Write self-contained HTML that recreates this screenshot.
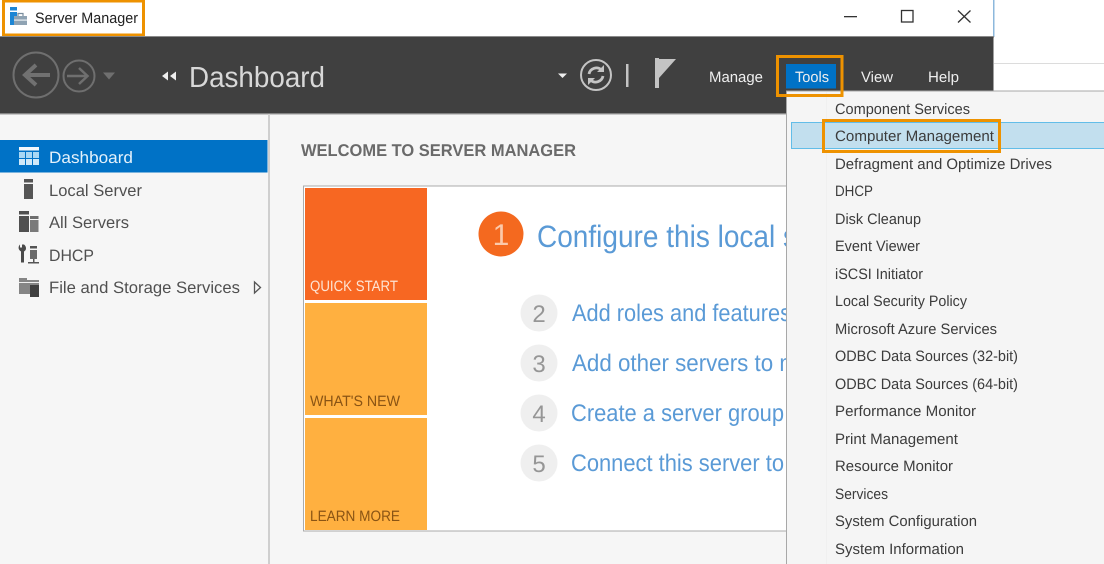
<!DOCTYPE html>
<html><head><meta charset="utf-8"><title>Server Manager</title>
<style>
html,body{margin:0;padding:0;background:#fff;width:1104px;height:564px;overflow:hidden}
svg{display:block;font-family:"Liberation Sans",sans-serif;filter:blur(.35px)}
.m{font-size:15px;fill:#3c3c3c}
.s{font-size:16.5px;fill:#505050}
.b{font-size:24px;fill:#5a9ad6}
.n{font-size:24px;fill:#969696;text-anchor:middle}
.t{font-size:15px;fill:#f2f2f2}
</style></head><body>
<svg width="1104" height="564" viewBox="0 0 1104 564" xmlns="http://www.w3.org/2000/svg" text-rendering="geometricPrecision">
<rect width="1104" height="564" fill="#fff"/>
<!-- outside window -->
<rect x="994" y="63" width="110" height="1" fill="#dcdcdc"/>
<rect x="993" y="0" width="1.5" height="37" fill="#8db8dc"/>
<!-- title -->
<text x="35" y="23" font-size="15" fill="#222" textLength="103" lengthAdjust="spacingAndGlyphs">Server Manager</text>
<g>
<rect x="10" y="7" width="7" height="3.5" fill="#1e86d4"/>
<rect x="10" y="12" width="7" height="13" fill="#1e86d4"/>
<rect x="14" y="16" width="13" height="9" fill="#8fa3b3"/>
<rect x="14" y="19.5" width="13" height="1.2" fill="#e8eef2"/>
<path d="M18 16v-2.500h5V16" fill="none" stroke="#7b8e9e" stroke-width="1.200"/>
</g>
<rect x="3.500" y="1" width="140" height="34" fill="none" stroke="#ee9200" stroke-width="3"/>
<!-- window controls -->
<rect x="844" y="16" width="13" height="1.300" fill="#333"/>
<rect x="901.500" y="10.500" width="11.500" height="11.500" fill="none" stroke="#333" stroke-width="1.300"/>
<path d="M958 10.500l12.500 12M970.500 10.500l-12.500 12" stroke="#333" stroke-width="1.300" fill="none"/>
<!-- dark bar -->
<rect x="0" y="36" width="994" height="1.500" fill="#8a8a8a"/>
<rect x="0" y="37" width="993.500" height="77" fill="#404040"/>
<rect x="0" y="113.500" width="993" height="1.500" fill="#c8c8c8"/>
<!-- nav -->
<g fill="none" stroke="#6f6f6f">
<circle cx="36" cy="75" r="22.500" stroke-width="2"/>
<path d="M26 75h24" stroke-width="4" stroke="#717171"/>
<path d="M36 65l-11 10 11 10" stroke-width="4" stroke="#717171"/>
<circle cx="79" cy="76" r="15.500" stroke-width="2"/>
<path d="M67 76h20" stroke-width="2.500"/>
<path d="M79 68l8.500 8-8.500 8" stroke-width="2.500"/>
</g>
<path d="M103 72.500h12l-6 7z" fill="#6f6f6f"/>
<path d="M162 76l6-4.500v9zM170 76l6-4.500v9z" fill="#eee"/>
<text x="189" y="87" font-size="29" fill="#d8d8d8" textLength="136" lengthAdjust="spacingAndGlyphs">Dashboard</text>
<path d="M558 73.500h9l-4.500 4.500z" fill="#eee"/>
<circle cx="596" cy="75" r="15" fill="none" stroke="#c4c4c4" stroke-width="2"/>
<path d="M589 74a7.500 7.500 0 0 1 12.500-4M603 76a7.500 7.500 0 0 1-12.500 4" fill="none" stroke="#c4c4c4" stroke-width="2.800"/>
<path d="M604 65v7h-7zM588 85v-7h7z" fill="#c4c4c4"/>
<rect x="626" y="64" width="2.500" height="23" fill="#c4c4c4"/>
<rect x="655" y="58" width="4" height="30" fill="#c4c4c4"/>
<path d="M659 59h17l-17 19z" fill="#c4c4c4"/>
<text x="709" y="82" font-size="15" fill="#eee" textLength="54" lengthAdjust="spacingAndGlyphs">Manage</text>
<rect x="786" y="64" width="50" height="24.500" fill="#0072c6"/>
<text x="795" y="82" font-size="15" fill="#eee" textLength="34" lengthAdjust="spacingAndGlyphs">Tools</text>
<text x="861" y="82" font-size="15" fill="#eee" textLength="32" lengthAdjust="spacingAndGlyphs">View</text>
<text x="928" y="82" font-size="15" fill="#eee" textLength="31" lengthAdjust="spacingAndGlyphs">Help</text>
<!-- sidebar -->
<rect x="0" y="115" width="268" height="449" fill="#f6f6f6"/>
<rect x="268" y="114" width="2" height="450" fill="#cfcfcf"/>
<rect x="270" y="115" width="520" height="449" fill="#f6f6f6"/>
<rect x="0" y="140" width="267.500" height="32.500" fill="#0072c6"/>
<g>
<rect x="19" y="147" width="20" height="3.500" fill="#f4f8fc"/>
<rect x="19" y="152" width="6" height="6" fill="#a9d8f4"/><rect x="26" y="152" width="6" height="6" fill="#a9d8f4"/><rect x="33" y="152" width="6" height="6" fill="#a9d8f4"/>
<rect x="19" y="159" width="6" height="6" fill="#cfe9f9"/><rect x="26" y="159" width="6" height="6" fill="#cfe9f9"/><rect x="33" y="159" width="6" height="6" fill="#cfe9f9"/>
</g>
<rect x="24" y="179" width="9" height="3.500" fill="#555"/><rect x="24" y="184" width="9" height="15" fill="#555"/>
<rect x="19" y="211" width="10" height="3.500" fill="#505050"/><rect x="19" y="216" width="10" height="16" fill="#505050"/>
<rect x="30" y="216" width="8.500" height="3" fill="#6e6e6e"/><rect x="30" y="220" width="8.500" height="12" fill="#7a7a7a"/>
<path d="M23 245v3h-2v-3c-1 1-2 3-1 5 .5 1 1.500 1.500 2 2v11h3v-11c1-.5 2-1.500 2-3 0-1.500-.5-3-2-4z" fill="#4a4a4a" transform="translate(-1 -.5)"/>
<rect x="30" y="246" width="7" height="2.500" fill="#555"/><rect x="30" y="250" width="7" height="9" fill="#6a6a6a"/>
<rect x="28" y="262" width="11" height="1.500" fill="#555"/><rect x="33" y="259" width="1.500" height="3" fill="#555"/>
<path d="M19 278h8v2h12v14H19z" fill="#858585"/>
<rect x="19" y="282" width="20" height="1" fill="#eee"/>
<rect x="30" y="285" width="9" height="12" fill="#3f3f3f"/>
<g class="s">
<text x="49" y="163" class="s" style="fill:#e3f1fb" textLength="84" lengthAdjust="spacingAndGlyphs">Dashboard</text>
<text x="49" y="196" class="s" textLength="93" lengthAdjust="spacingAndGlyphs">Local Server</text>
<text x="49" y="228" class="s" textLength="80" lengthAdjust="spacingAndGlyphs">All Servers</text>
<text x="49" y="261" class="s" textLength="45" lengthAdjust="spacingAndGlyphs">DHCP</text>
<text x="49" y="293" class="s" textLength="191" lengthAdjust="spacingAndGlyphs">File and Storage Services</text>
</g>
<path d="M254.500 282v11l6-5.500z" fill="#f6f6f6" stroke="#555" stroke-width="1.300"/>
<!-- main -->
<text x="301" y="156" font-size="17" font-weight="bold" fill="#6a6a6a" textLength="275" lengthAdjust="spacingAndGlyphs">WELCOME TO SERVER MANAGER</text>
<rect x="303.500" y="186" width="490" height="345" fill="#fff" stroke="#ababab" stroke-width="1"/>
<rect x="305" y="188" width="122" height="112" fill="#f76722"/>
<rect x="305" y="303" width="122" height="112" fill="#ffb040"/>
<rect x="305" y="418" width="122" height="112" fill="#ffb040"/>
<text x="310" y="291" class="t" style="fill:#fde3d3" textLength="88" lengthAdjust="spacingAndGlyphs">QUICK START</text>
<text x="310" y="406" class="t" style="fill:#8a5414" textLength="90" lengthAdjust="spacingAndGlyphs">WHAT'S NEW</text>
<text x="310" y="521" class="t" style="fill:#8a5414" textLength="90" lengthAdjust="spacingAndGlyphs">LEARN MORE</text>
<circle cx="501" cy="234" r="22.500" fill="#f4691f"/>
<text x="501" y="245" font-size="30" fill="#fbc9ab" text-anchor="middle">1</text>
<text x="537" y="247" font-size="31" fill="#5a9ad6" textLength="260" lengthAdjust="spacingAndGlyphs">Configure this local s</text>
<circle cx="539" cy="313" r="18.500" fill="#efefef"/><circle cx="539" cy="363" r="18.500" fill="#efefef"/>
<circle cx="539" cy="413" r="18.500" fill="#efefef"/><circle cx="539" cy="463" r="18.500" fill="#efefef"/>
<text x="539" y="322" class="n">2</text><text x="539" y="372" class="n">3</text>
<text x="539" y="422" class="n">4</text><text x="539" y="472" class="n">5</text>
<text x="572" y="321" class="b" textLength="219" lengthAdjust="spacingAndGlyphs">Add roles and features</text>
<text x="572" y="371" class="b" textLength="226" lengthAdjust="spacingAndGlyphs">Add other servers to m</text>
<text x="571" y="421" class="b" textLength="213" lengthAdjust="spacingAndGlyphs">Create a server group</text>
<text x="571" y="471" class="b" textLength="213" lengthAdjust="spacingAndGlyphs">Connect this server to</text>
<!-- menu -->
<rect x="786.500" y="91" width="330" height="480" fill="#f5f5f5" stroke="#a8a8a8" stroke-width="1"/>
<rect x="826" y="92" width="1" height="472" fill="#f0f0f0"/>
<rect x="791.500" y="122.500" width="320" height="26" fill="#c2dfee" stroke="#62bde8" stroke-width="1"/>
<g class="m">
<text class="m" x="835" y="114" textLength="135" lengthAdjust="spacingAndGlyphs">Component Services</text>
<text class="m" x="835" y="141" textLength="159" lengthAdjust="spacingAndGlyphs">Computer Management</text>
<text class="m" x="835" y="169" textLength="217" lengthAdjust="spacingAndGlyphs">Defragment and Optimize Drives</text>
<text class="m" x="835" y="196" textLength="38" lengthAdjust="spacingAndGlyphs">DHCP</text>
<text class="m" x="835" y="224" textLength="86" lengthAdjust="spacingAndGlyphs">Disk Cleanup</text>
<text class="m" x="835" y="251" textLength="85" lengthAdjust="spacingAndGlyphs">Event Viewer</text>
<text class="m" x="835" y="279" textLength="88" lengthAdjust="spacingAndGlyphs">iSCSI Initiator</text>
<text class="m" x="835" y="306" textLength="132" lengthAdjust="spacingAndGlyphs">Local Security Policy</text>
<text class="m" x="835" y="334" textLength="162" lengthAdjust="spacingAndGlyphs">Microsoft Azure Services</text>
<text class="m" x="835" y="361" textLength="183" lengthAdjust="spacingAndGlyphs">ODBC Data Sources (32-bit)</text>
<text class="m" x="835" y="389" textLength="183" lengthAdjust="spacingAndGlyphs">ODBC Data Sources (64-bit)</text>
<text class="m" x="835" y="416" textLength="141" lengthAdjust="spacingAndGlyphs">Performance Monitor</text>
<text class="m" x="835" y="444" textLength="123" lengthAdjust="spacingAndGlyphs">Print Management</text>
<text class="m" x="835" y="471" textLength="118" lengthAdjust="spacingAndGlyphs">Resource Monitor</text>
<text class="m" x="835" y="499" textLength="53" lengthAdjust="spacingAndGlyphs">Services</text>
<text class="m" x="835" y="526" textLength="142" lengthAdjust="spacingAndGlyphs">System Configuration</text>
<text class="m" x="835" y="554" textLength="129" lengthAdjust="spacingAndGlyphs">System Information</text>
</g>
<!-- callouts -->
<rect x="777.500" y="56.500" width="64.500" height="39" fill="none" stroke="#ee9200" stroke-width="3"/>
<rect x="823.500" y="120.500" width="176" height="31" fill="none" stroke="#ee9200" stroke-width="3"/>
</svg>
</body></html>
